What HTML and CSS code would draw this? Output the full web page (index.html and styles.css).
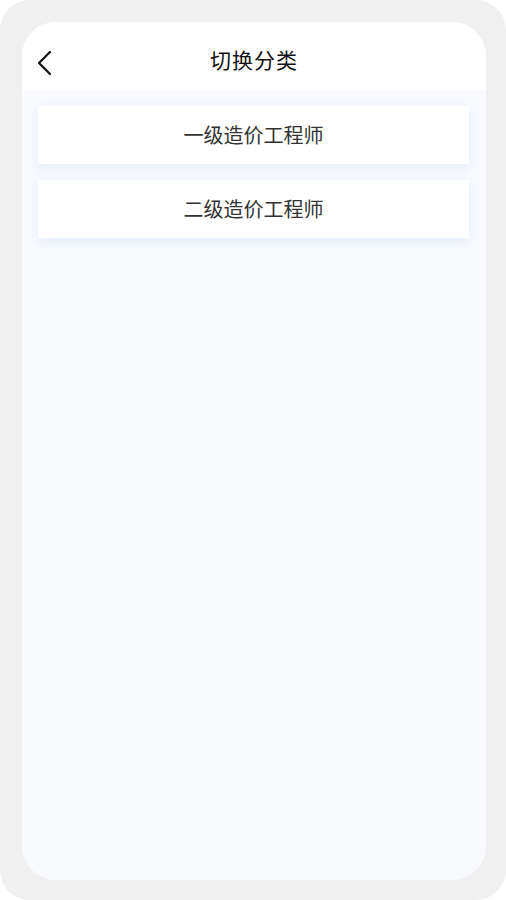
FILE: index.html
```html
<!DOCTYPE html>
<html lang="zh">
<head>
<meta charset="utf-8">
<title>切换分类</title>
<link rel="stylesheet" href="styles.css">
</head>
<body>
<div class="frame">
  <div class="screen">
    <header class="nav">
      <span class="back">
        <svg width="16" height="26" viewBox="0 0 16 26"><path d="M14 2 L3 13 L14 24" fill="none" stroke="#111" stroke-width="2.2" stroke-linecap="round" stroke-linejoin="round"/></svg>
      </span>
      <h1 class="title">切换分类</h1>
    </header>
    <main class="list">
      <div class="card">一级造价工程师</div>
      <div class="card">二级造价工程师</div>
    </main>
  </div>
</div>
</body>
</html>
```
FILE: styles.css
```css
html, body {
  margin: 0;
  padding: 0;
  background: #ffffff;
}
body {
  font-family: "Noto Sans CJK SC", "Noto Sans", sans-serif;
}
.frame {
  width: 506px;
  height: 900px;
  box-sizing: border-box;
  padding: 22px 20px 20px 22px;
  background: #f0f0f0;
  border-radius: 30px;
}
.screen {
  height: 100%;
  border-radius: 34px;
  overflow: hidden;
  background: #f8fafe;
  display: flex;
  flex-direction: column;
}
.nav {
  height: 68px;
  box-sizing: border-box;
  padding-top: 6px;
  flex: none;
  background: #ffffff;
  display: flex;
  align-items: center;
  justify-content: center;
  position: relative;
}
.back {
  position: absolute;
  left: 14px;
  top: 28px;
  display: flex;
}
.title {
  margin: 0;
  font-size: 21px;
  font-weight: 400;
  color: #111111;
  letter-spacing: 1px;
}
.list {
  padding: 16px 17px 0 16px;
  display: flex;
  flex-direction: column;
  gap: 16px;
}
.card {
  height: 58px;
  padding-bottom: 2px;
  box-sizing: border-box;
  background: #ffffff;
  box-shadow: 0 3px 10px rgba(205, 220, 245, 0.45);
  display: flex;
  align-items: center;
  justify-content: center;
  font-size: 20px;
  color: #333333;
}
```
